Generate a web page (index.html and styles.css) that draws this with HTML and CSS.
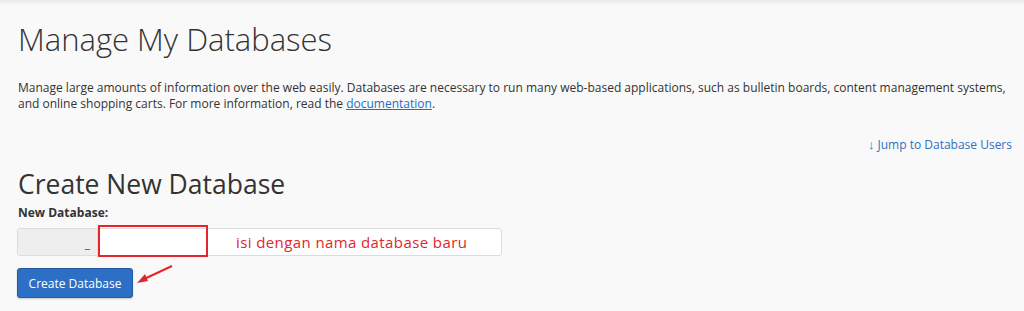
FILE: index.html
```html
<!DOCTYPE html>
<html>
<head>
  <meta charset="UTF-8" />
  <title>Manage My Databases</title>
  <link rel="stylesheet" href="styles.css">
</head>
<body>
<div class="page">
  <h1>Manage My Databases</h1>

  <p class="intro">Manage large amounts of information over the web easily. Databases are necessary to run many web-based applications, such as bulletin boards, content management systems,<br>
  and online shopping carts. For more information, read the <a href="#">documentation</a>.</p>

  <div class="jump-row">
    <a href="#" class="jump-link"><b>&#8595;</b> Jump to Database Users</a>
  </div>

  <h2>Create New Database</h2>

  <form class="create-form">
    <label for="newDb">New Database:</label>
    <div class="input-group">
      <span class="prefix">_</span>
      <div class="field-wrap">
        <input type="text" id="newDb" />
        <span class="highlight"></span>
        <span class="hint">isi dengan nama database baru</span>
      </div>
    </div>
    <div class="button-row">
      <button type="button" class="btn-primary">Create Database</button>
      <svg class="arrow" width="44" height="24" viewBox="0 0 44 24">
        <line x1="38" y1="3" x2="8" y2="17" stroke="#e3262b" stroke-width="2" />
        <polygon points="3,20 11,11 14,18" fill="#e3262b" />
      </svg>
    </div>
  </form>
</div>
</body>
</html>
```

FILE: styles.css
```css
html, body {
  margin: 0;
  padding: 0;
}
body {
  background-color: #f9f9f9;
  font-family: 'Open Sans', sans-serif;
  color: #333333;
  height: 311px;
  overflow: hidden;
}
.page {
  padding: 6px 12px 0 17px;
  background: linear-gradient(#e9e9e9, #f9f9f9 6px);
}
h1 {
  margin: 11px 0 0 1px;
  font-size: 31px;
  font-weight: 300;
  line-height: 44px;
  color: #333333;
}
.intro {
  margin: 19px 0 0 1px;
  font-size: 12px;
  line-height: 16px;
}
.intro a {
  color: #1d6fc9;
}
.jump-row {
  display: flex;
  justify-content: flex-end;
  margin-top: 24px;
}
.jump-link {
  font-size: 12px;
  line-height: 17px;
  color: #2f71c2;
  text-decoration: none;
}
.jump-link b {
  font-size: 13px;
}
h2 {
  margin: 14px 0 0 1px;
  font-size: 26.5px;
  font-weight: 400;
  line-height: 34px;
}
label {
  display: block;
  margin: 3px 0 0 1px;
  font-size: 12px;
  font-weight: 700;
  line-height: 17px;
}
.input-group {
  display: flex;
  width: 485px;
  height: 28px;
  margin-top: 7px;
  box-sizing: border-box;
  border: 1px solid #dddddd;
  border-radius: 3px;
  background: #ffffff;
}
.prefix {
  width: 80px;
  box-sizing: border-box;
  padding: 6px 7px 0 0;
  text-align: right;
  background: #eeeeee;
  border-right: 1px solid #dddddd;
  font-size: 12px;
  line-height: 17px;
  color: #555555;
  border-radius: 3px 0 0 3px;
}
.field-wrap {
  position: relative;
  flex: 1;
  display: flex;
  align-items: center;
}
.field-wrap input {
  flex: 1;
  height: 100%;
  border: none;
  background: transparent;
  outline: none;
  padding: 0 8px;
}
.highlight {
  position: absolute;
  left: 0;
  top: -4px;
  width: 110px;
  height: 32px;
  box-sizing: border-box;
  border: 2px solid #e3262b;
}
.hint {
  position: absolute;
  left: 138px;
  top: 3px;
  font-size: 15px;
  line-height: 20px;
  color: #e3262b;
  letter-spacing: 0.4px;
}
.button-row {
  display: flex;
  align-items: flex-start;
  margin-top: 12px;
}
.btn-primary {
  width: 116px;
  height: 30px;
  padding: 0;
  background: #2d6fc4;
  color: #ffffff;
  border: 1px solid #225ca6;
  border-radius: 3px;
  font-family: 'Open Sans', sans-serif;
  font-size: 12px;
  box-shadow: 0 1px 2px rgba(0, 0, 0, 0.2);
}
.arrow {
  margin: -5px 0 0 1px;
}
```
